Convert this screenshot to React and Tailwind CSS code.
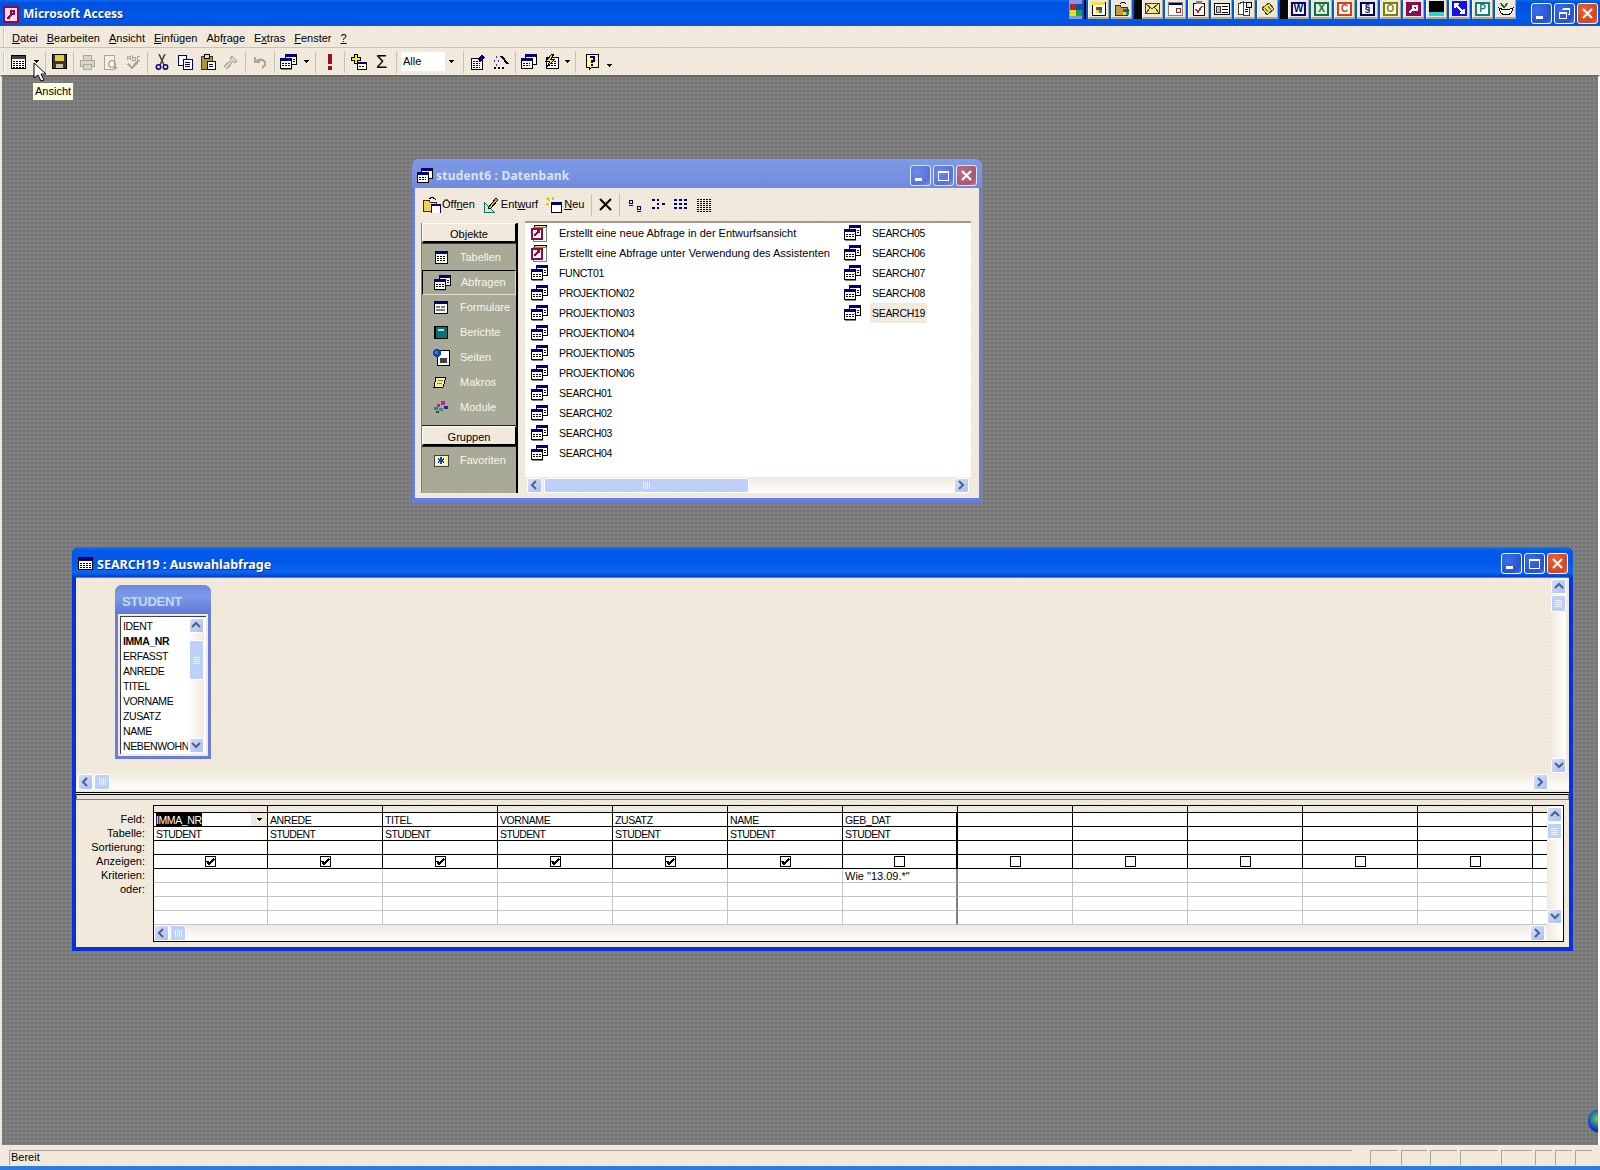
import React from 'react';

const beige = "bg-[#f1eadd] bg-[radial-gradient(#e8dfcf_0.6px,transparent_0.8px)] bg-[length:3px_3px]";
const desk = "bg-[#808080] bg-[radial-gradient(#6f6f6f_0.7px,transparent_0.9px)] bg-[length:4px_4px]";

const Ico = ({ w = 16, h = 16, children, className = '' }) => (
  <svg width={w} height={h} viewBox={`0 0 ${w} ${h}`} shapeRendering="crispEdges" className={`shrink-0 ${className}`}>{children}</svg>
);

const MiniTable = ({ x, y, w = 11, h = 10, head = '#000080' }) => (
  <g>
    <rect x={x} y={y} width={w} height={h} fill="#fff" stroke="#000" />
    <rect x={x} y={y} width={w} height="3" fill={head} />
    <path d={`M${x + 2} ${y + 5}h${w - 3}M${x + 2} ${y + 7}h${w - 3}`} stroke="#000" strokeDasharray="2 1" />
  </g>
);

const QueryIcon = () => (
  <Ico w={17} h={16}>
    <rect x="7" y="2" width="10" height="9" fill="#808080" />
    <MiniTable x={5} y={0} />
    <rect x="1" y="6" width="11" height="10" fill="#808080" />
    <MiniTable x={0} y={4} />
  </Ico>
);

const WizardIcon = () => (
  <Ico w={17} h={17}>
    <rect x="3" y="0" width="12" height="3" fill="#f5e050" stroke="#000" />
    <rect x="2" y="2" width="13" height="14" fill="#fff" stroke="#808080" />
    <rect x="1" y="4" width="10" height="10" fill="#fff" stroke="#8b0a50" strokeWidth="1.5" />
    <path d="M3 11l4-4M6 6h2v2" stroke="#8b0a50" fill="none" strokeWidth="1.5" />
  </Ico>
);

const KeyIcon = () => (
  <Ico w={16} h={17}>
    <rect x="0" y="0" width="16" height="17" fill="#8b0a50" />
    <rect x="2" y="2" width="12" height="13" fill="#f4dce8" />
    <path d="M4 13l5-5M8 5h3v3h-3zM5 11l1 2" stroke="#8b0a50" fill="none" strokeWidth="1.6" />
  </Ico>
);

const Sheet = () => (
  <Ico w={15} h={14}>
    <rect x="0.5" y="0.5" width="14" height="13" fill="#fff" stroke="#000" />
    <rect x="1" y="1" width="13" height="3" fill="#404050" />
    <path d="M2 6h11M2 8h11M2 10h11M2 12h11" stroke="#000" strokeDasharray="2 1" />
  </Ico>
);

const Disk = () => (
  <Ico w={15} h={15}>
    <rect x="0.5" y="0.5" width="14" height="14" fill="#3a3a20" stroke="#000" />
    <rect x="3" y="1" width="9" height="6" fill="#e8c83c" />
    <rect x="4" y="10" width="7" height="4" fill="#c8c8a0" />
  </Ico>
);

const GrayDoc = ({ kind }) => (
  <Ico w={16} h={16}>
    {kind === 'print' && <g fill="#d8d4c8" stroke="#aca899"><rect x="4" y="1" width="8" height="5" /><rect x="1" y="6" width="14" height="6" /><rect x="4" y="10" width="8" height="5" /></g>}
    {kind === 'preview' && <g fill="none" stroke="#aca899"><rect x="2" y="1" width="10" height="14" fill="#f4f1e8" /><circle cx="10" cy="10" r="3.5" strokeWidth="1.5" /><path d="M13 13l2 2" strokeWidth="2" /></g>}
    {kind === 'spell' && <g fill="none" stroke="#aca899"><path d="M2 6V2h3v4M2 4h3M7 1v5h3V3.500H7M15 2h-3v4h3" /><path d="M3 10l4 4 7-8" strokeWidth="2.500" /></g>}
    {kind === 'brush' && <g fill="#d8d4c8" stroke="#aca899"><path d="M9 2l5 5-3 2-4-4zM7 7l2 2-5 6-3-3z" /></g>}
    {kind === 'undo' && <g fill="none" stroke="#aca899" strokeWidth="2"><path d="M3 3v5h5M4 8c3-4 9-3 9 2 0 2-1 3-3 4" /></g>}
  </Ico>
);

const Scissors = () => (
  <Ico w={14} h={16}>
    <g fill="none" stroke="#000080" strokeWidth="1.500" shapeRendering="auto">
      <path d="M4 0l5 11M10 0L5 11" stroke="#404040" />
      <circle cx="3.500" cy="13" r="2.200" />
      <circle cx="10.500" cy="13" r="2.200" />
    </g>
  </Ico>
);

const Copy = () => (
  <Ico w={16} h={16}>
    <rect x="1" y="1" width="8" height="10" fill="#fff" stroke="#000080" />
    <rect x="6" y="5" width="9" height="10" fill="#fff" stroke="#000080" />
    <path d="M8 8h5M8 10h5M8 12h5" stroke="#000080" />
  </Ico>
);

const Paste = () => (
  <Ico w={16} h={16}>
    <rect x="1" y="2" width="11" height="13" fill="#a89838" stroke="#403818" />
    <rect x="4" y="0" width="5" height="4" fill="#e8e0a0" stroke="#000" />
    <rect x="7" y="7" width="8" height="8" fill="#fff" stroke="#000080" />
    <path d="M9 10h4M9 12h4" stroke="#000080" />
  </Ico>
);

const Bang = () => (
  <Ico w={6} h={16}>
    <rect x="1" y="0" width="4" height="10" fill="#a01010" />
    <rect x="1" y="12" width="4" height="4" fill="#a01010" />
  </Ico>
);

const ShowTable = () => (
  <Ico w={17} h={16}>
    <path d="M4 0h3v3h3v3H7v3H4V6H1V3h3z" fill="#f8e830" stroke="#000" />
    <rect x="7" y="8" width="9" height="7" fill="#fff" stroke="#000" />
    <rect x="7" y="8" width="9" height="2" fill="#000080" />
    <path d="M9 12h5" stroke="#000" strokeDasharray="2 1" />
  </Ico>
);

const Props = () => (
  <Ico w={16} h={16}>
    <rect x="1" y="4" width="11" height="11" fill="#fff" stroke="#000" />
    <path d="M3 7h7M3 9h7M3 11h7M3 13h7" stroke="#000" strokeDasharray="2 1" />
    <path d="M7 5l5-4 3 3-5 4z" fill="#000080" />
  </Ico>
);

const Wand = () => (
  <Ico w={16} h={16}>
    <path d="M8 2l7 8" stroke="#000" strokeWidth="2" />
    <path d="M3 3h1M1 7h1M5 7h1M3 11h1" stroke="#2040c0" strokeWidth="2" />
    <path d="M1 14h2M5 14h2M9 14h2" stroke="#000" strokeWidth="2" />
  </Ico>
);

const DbWin = () => (
  <Ico w={16} h={15}>
    <rect x="4" y="0" width="11" height="10" fill="#fff" stroke="#000" />
    <rect x="4" y="0" width="11" height="3" fill="#000080" />
    <rect x="0" y="4" width="11" height="10" fill="#fff" stroke="#000" />
    <rect x="0" y="4" width="11" height="3" fill="#000080" />
    <path d="M2 9h7M2 11h7" stroke="#000" strokeDasharray="2 1" />
  </Ico>
);

const NewObj = () => (
  <Ico w={16} h={15}>
    <rect x="3" y="3" width="12" height="11" fill="#fff" stroke="#000" />
    <path d="M5 7h8M5 9h8M5 11h8" stroke="#000" strokeDasharray="2 1" />
    <path d="M9 0L3 7h4l-3 6 8-8H8l3-5z" fill="#f8e030" stroke="#000" />
  </Ico>
);

const Help = () => (
  <Ico w={15} h={18}>
    <path d="M1 1h12v13H7l-3 3v-3H1z" fill="#fff8a0" stroke="#000" />
    <path d="M5 4h4v4H7v2M7 11v2" stroke="#000080" strokeWidth="2" fill="none" />
  </Ico>
);

const Caret = ({ className = '' }) => (
  <Ico w={5} h={3} className={className}><path d="M0 0h5v1H0zM1 1h3v1H1zM2 2h1v1H2z" fill="#000" /></Ico>
);

const TbCell = ({ children, w = 'w-[23px]' }) => (
  <div className={`${w} h-full shrink-0 flex items-center justify-center`}>{children}</div>
);

const TbSep = ({ w = 'w-[6px]' }) => (
  <div className={`${w} h-[22px] shrink-0 flex justify-center`}><div className="w-px h-full bg-[#c5c2b8]" /></div>
);

const Grip = () => (
  <div className="w-[2px] h-[20px] bg-[#c5c2b8] border-r border-white shrink-0" />
);

const menus = [
  ['D', 'atei'], ['B', 'earbeiten'], ['A', 'nsicht'], ['E', 'infügen'],
  ['Ab', 'frage', 'f'], ['E', 'xtras', 'x'], ['F', 'enster'], ['?', ''],
];

const MenuBar = () => (
  <div className={`h-[22px] flex items-center pl-[3px] border-b border-[#c5c2b8] ${beige}`}>
    <Grip />
    <div className="flex gap-[9px] ml-[7px] pt-[3px]">
      {menus.map(([a, b], i) => (
        <span key={i} className="text-[11px] leading-none text-black">
          {i === 4 ? <>Abf<u>r</u>age</> : i === 5 ? <>E<u>x</u>tras</> : <><u>{a}</u>{b}</>}
        </span>
      ))}
    </div>
  </div>
);

const Toolbar = () => (
  <div className={`h-[27px] flex items-center pl-[3px] ${beige}`}>
    <Grip />
    <div className="flex items-center h-full ml-[2px]">
      <TbCell><Sheet /></TbCell>
      <TbCell w="w-[12px]"><Caret /></TbCell>
      <TbSep />
      <TbCell><Disk /></TbCell>
      <TbSep w="w-[4px]" />
      <TbCell><GrayDoc kind="print" /></TbCell>
      <TbCell><GrayDoc kind="preview" /></TbCell>
      <TbCell><GrayDoc kind="spell" /></TbCell>
      <TbSep />
      <TbCell><Scissors /></TbCell>
      <TbCell><Copy /></TbCell>
      <TbCell><Paste /></TbCell>
      <TbCell><GrayDoc kind="brush" /></TbCell>
      <TbSep />
      <TbCell><GrayDoc kind="undo" /></TbCell>
      <TbSep />
      <TbCell><QueryIcon /></TbCell>
      <TbCell w="w-[12px]"><Caret /></TbCell>
      <TbSep />
      <TbCell><Bang /></TbCell>
      <TbSep />
      <TbCell><ShowTable /></TbCell>
      <TbCell><span className="text-[18px] leading-none text-black">Σ</span></TbCell>
      <TbSep />
      <div className="w-[56px] h-[19px] ml-[2px] mr-[3px] bg-white flex items-center justify-between pl-[2px]">
        <span className="text-[11px] leading-none">Alle</span>
        <div className={`w-[12px] h-full flex items-center justify-center ${beige}`}><Caret /></div>
      </div>
      <TbSep />
      <TbCell><Props /></TbCell>
      <TbCell><Wand /></TbCell>
      <TbSep />
      <TbCell w="w-[22px]"><DbWin /></TbCell>
      <TbCell w="w-[22px]"><NewObj /></TbCell>
      <TbCell w="w-[10px]"><Caret /></TbCell>
      <TbSep />
      <div className="w-[3px]" />
      <TbCell><Help /></TbCell>
      <TbCell w="w-[10px]"><Caret className="mt-[8px]" /></TbCell>
    </div>
  </div>
);

const LaunchBtn = ({ children }) => (
  <div className="w-[21px] h-[19px] mr-[2px] shrink-0 bg-[#ece9d8] border-b-2 border-r border-[#aca899] border-l border-l-white flex items-center justify-center overflow-hidden">
    {children}
  </div>
);

const LetterIcon = ({ color, bg = 'bg-white', children }) => (
  <div className={`w-[15px] h-[14px] border-2 flex items-center justify-center text-[10px] font-bold leading-none ${bg}`} style={{ borderColor: color, color }}>{children}</div>
);

const QuickLaunch = () => (
  <div className="flex items-start h-full ml-[1069px]">
    <div className="w-[13px] h-[19px] bg-[#7f9adf] flex items-center justify-center">
      <Ico w={12} h={12}>
        <rect x="0" y="0" width="6" height="6" fill="#c02020" /><rect x="6" y="0" width="6" height="6" fill="#2040c0" />
        <rect x="0" y="6" width="6" height="6" fill="#e8e020" /><rect x="6" y="6" width="6" height="6" fill="#20a040" />
      </Ico>
    </div>
    <div className="w-[2px] h-[19px] bg-[#0a0a0a] mx-[2px]" />
    <LaunchBtn>
      <Ico w={15} h={15}>
        <rect x="1" y="1" width="13" height="13" fill="#fff" stroke="#000" />
        <rect x="1" y="1" width="13" height="3" fill="#f0e040" />
        <rect x="5" y="6" width="3" height="3" fill="#d02020" /><rect x="8" y="6" width="3" height="3" fill="#2040d0" />
        <rect x="5" y="9" width="3" height="3" fill="#e8e020" /><rect x="8" y="9" width="3" height="3" fill="#20a040" />
      </Ico>
    </LaunchBtn>
    <LaunchBtn>
      <Ico w={16} h={15}>
        <path d="M1 4h5l1 2h6v8H1z" fill="#b8a040" stroke="#403010" />
        <path d="M6 3c2-3 5-2 6 0" fill="none" stroke="#000" />
        <rect x="9" y="8" width="3" height="3" fill="#d02020" /><rect x="12" y="8" width="3" height="3" fill="#2040d0" />
        <rect x="9" y="11" width="3" height="3" fill="#e8e020" /><rect x="12" y="11" width="3" height="3" fill="#20a040" />
      </Ico>
    </LaunchBtn>
    <div className="w-[8px] h-[19px] bg-[#0a0a0a] shrink-0" />
    <LaunchBtn>
      <Ico w={15} h={11}><rect x="0.500" y="0.500" width="14" height="10" fill="#f8e890" stroke="#404020" /><path d="M1 1l6 5 6-5M1 10l4-5M14 10l-4-5" fill="none" stroke="#404020" /></Ico>
    </LaunchBtn>
    <LaunchBtn>
      <Ico w={15} h={14}><rect x="0.500" y="0.500" width="14" height="13" fill="#fff" stroke="#808080" /><rect x="1" y="1" width="13" height="2" fill="#000080" /><rect x="8" y="6" width="4" height="4" fill="none" stroke="#a02020" /></Ico>
    </LaunchBtn>
    <LaunchBtn>
      <Ico w={12} h={15}><rect x="0.500" y="2.500" width="11" height="12" fill="#fff" stroke="#000" /><rect x="3" y="0" width="6" height="3" fill="#808080" /><path d="M3 8l2 3 4-6" fill="none" stroke="#c02020" strokeWidth="1.500" /></Ico>
    </LaunchBtn>
    <LaunchBtn>
      <Ico w={16} h={12}><rect x="0.500" y="0.500" width="15" height="11" fill="#fff" stroke="#000" /><rect x="2" y="3" width="4" height="6" fill="#c0c0c0" stroke="#404040" /><path d="M8 3h6M8 6h6M8 9h6" stroke="#000" /></Ico>
    </LaunchBtn>
    <LaunchBtn>
      <Ico w={16} h={15}><path d="M1 3l5-2v12l-5 1zM6 1h6v13H6z" fill="#fff" stroke="#404040" /><circle cx="12" cy="4" r="3" fill="#e8e8e8" stroke="#000" /><path d="M8 8h3M8 10h3" stroke="#000" /></Ico>
    </LaunchBtn>
    <LaunchBtn>
      <Ico w={14} h={14}><path d="M1 6l7-5 5 6-7 6z" fill="#f0e060" stroke="#404020" /><path d="M4 6l3 4M7 4l3 4" stroke="#808040" /></Ico>
    </LaunchBtn>
    <div className="w-[8px] h-[19px] bg-[#0a0a0a] shrink-0" />
    <LaunchBtn><LetterIcon color="#000080">W</LetterIcon></LaunchBtn>
    <LaunchBtn><LetterIcon color="#107040" bg="bg-[#e0f0e0]">X</LetterIcon></LaunchBtn>
    <LaunchBtn><LetterIcon color="#d04010">C</LetterIcon></LaunchBtn>
    <LaunchBtn><LetterIcon color="#000060">§</LetterIcon></LaunchBtn>
    <LaunchBtn><LetterIcon color="#808000">O</LetterIcon></LaunchBtn>
    <LaunchBtn>
      <div className="w-[15px] h-[14px] bg-[#8b0a50] flex items-center justify-center">
        <Ico w={11} h={10}><path d="M1 9l5-5M5 2h4v4H5z" stroke="#fff" fill="none" strokeWidth="1.500" /></Ico>
      </div>
    </LaunchBtn>
    <LaunchBtn>
      <div className="w-[15px] h-[15px] bg-black flex flex-col justify-end"><div className="h-[4px] bg-[#30d0d0]" /></div>
    </LaunchBtn>
    <LaunchBtn>
      <div className="w-[15px] h-[15px] bg-[#1010f0] flex items-center justify-center">
        <Ico w={11} h={11}><path d="M1 5V1h4M1 1l9 9M10 6v4H6" stroke="#fff" fill="none" strokeWidth="1.500" /></Ico>
      </div>
    </LaunchBtn>
    <LaunchBtn><LetterIcon color="#108080">P</LetterIcon></LaunchBtn>
    <LaunchBtn>
      <Ico w={16} h={14}><path d="M1 6c3 2 11 2 14 0-1 6-4 7-7 7s-6-1-7-7z" fill="#fff" stroke="#000" /><path d="M3 1l3 5M9 1L7 5" stroke="#107030" strokeWidth="2" /></Ico>
    </LaunchBtn>
  </div>
);

const winTones = {
  active: {
    base: 'bg-[radial-gradient(circle_at_30%_30%,#3a6ee8,#2a50d0_70%,#4a78f0)]',
    close: 'bg-[radial-gradient(circle_at_30%_30%,#e8603c,#d04820_70%,#e86c40)]',
    edge: 'border-white',
  },
  inactive: {
    base: 'bg-[radial-gradient(circle_at_30%_30%,#6a8ae8,#5872d8_70%,#7b96ea)]',
    close: 'bg-[radial-gradient(circle_at_30%_30%,#b87088,#a85870_70%,#c07c90)]',
    edge: 'border-[#dfe6fa]',
  },
};

const WinBtn = ({ type, tone }) => {
  const t = winTones[tone];
  return (
    <div className={`w-[21px] h-[21px] rounded-[3px] border flex items-center justify-center ${t.edge} ${type === 'close' ? t.close : t.base}`}>
      <Ico w={13} h={13}>
        {type === 'min' && <rect x="1" y="9" width="7" height="3" fill="#fff" />}
        {type === 'max' && <path d="M1.500 2.500h10v9h-10zM1 3.500h11" fill="none" stroke="#fff" strokeWidth="1.500" />}
        {type === 'restore' && <path d="M4.500 1.500h7v6h-2M1.500 5.500h7v6h-7zM1 6.500h8M4 2.500h8" fill="none" stroke="#fff" />}
        {type === 'close' && <path d="M2 2l9 9M11 2l-9 9" stroke="#fff" strokeWidth="2.200" shapeRendering="auto" />}
      </Ico>
    </div>
  );
};

const Chevron = ({ dir }) => {
  const d = { up: 'M1 6l4-4 4 4', down: 'M1 2l4 4 4-4', left: 'M6 1L2 5l4 4', right: 'M2 1l4 4-4 4' }[dir];
  return <svg width="10" height="10" viewBox="0 0 10 10"><path d={d} fill="none" stroke="#4d6185" strokeWidth="2" /></svg>;
};

const ScrollBtn = ({ dir, className = 'w-[15px] h-[15px]' }) => (
  <div className={`shrink-0 rounded-[2px] border border-white bg-[linear-gradient(135deg,#d4e0fd,#a8c0f4)] flex items-center justify-center ${className}`}>
    <Chevron dir={dir} />
  </div>
);

const ThumbLines = ({ vertical }) => (
  <div className={`flex ${vertical ? 'flex-col gap-px' : 'gap-px'}`}>
    {[0, 1, 2, 3].map(i => <div key={i} className={`${vertical ? 'w-[7px] h-px' : 'w-px h-[7px]'} bg-[#eef2fd]`} />)}
  </div>
);

const Thumb = ({ vertical, className }) => (
  <div className={`shrink-0 rounded-[2px] border border-white bg-[#bcd0fa] flex items-center justify-center ${className}`}>
    <ThumbLines vertical={vertical} />
  </div>
);

const queries = ['FUNCT01', 'PROJEKTION02', 'PROJEKTION03', 'PROJEKTION04', 'PROJEKTION05', 'PROJEKTION06', 'SEARCH01', 'SEARCH02', 'SEARCH03', 'SEARCH04'];
const queries2 = ['SEARCH05', 'SEARCH06', 'SEARCH07', 'SEARCH08', 'SEARCH19'];

const ListRow = ({ icon, label, selected, upper }) => (
  <div className="h-[20px] flex items-center">
    <div className="w-[27px] flex shrink-0 -ml-px mr-px">{icon}</div>
    <span className={`leading-[20px] h-[20px] px-[2px] -ml-[2px] whitespace-nowrap ${upper ? 'text-[10.500px] tracking-[-0.3px]' : 'text-[11px]'} ${selected ? 'bg-[#f1eadd]' : ''}`}>{label}</span>
  </div>
);

const SideIcon = ({ type }) => (
  <Ico w={17} h={17}>
    {type === 'table' && <g><rect x="2" y="2" width="12" height="12" fill="#fff" stroke="#000" /><rect x="2" y="2" width="12" height="3" fill="#000080" /><path d="M4 7h9M4 9h9M4 11h9" stroke="#000" strokeDasharray="2 1" /></g>}
    {type === 'form' && <g><rect x="1" y="2" width="13" height="12" fill="#fff" stroke="#000" /><rect x="1" y="2" width="13" height="3" fill="#000080" /><rect x="3" y="7" width="4" height="2" fill="#808080" /><rect x="8" y="7" width="4" height="2" fill="#808080" /><rect x="3" y="10" width="9" height="2" fill="#808080" /></g>}
    {type === 'report' && <g><rect x="1" y="2" width="13" height="12" fill="#107070" stroke="#000" /><path d="M2 2v12" stroke="#000" strokeWidth="2" /><rect x="5" y="5" width="6" height="2" fill="#a0e0e0" /></g>}
    {type === 'page' && <g><rect x="4" y="1" width="12" height="15" fill="#fff" stroke="#000" /><circle cx="4" cy="4" r="4" fill="#1040c0" /><path d="M2 2h3v3H2z" fill="#20a040" /><rect x="7" y="9" width="7" height="5" fill="#404040" /></g>}
    {type === 'macro' && <g><path d="M3 3h10l-3 10H1z" fill="#f8f090" stroke="#000" /><path d="M5 6h5M4 9h5" stroke="#808040" /></g>}
    {type === 'module' && <g><rect x="1" y="8" width="4" height="3" fill="#2080a0" /><rect x="4" y="5" width="3" height="3" fill="#c020a0" /><rect x="8" y="2" width="4" height="4" fill="#c020a0" /><rect x="6" y="9" width="4" height="3" fill="#20a080" /><rect x="11" y="7" width="4" height="3" fill="#203080" /><rect x="3" y="12" width="3" height="2" fill="#404040" /></g>}
    {type === 'fav' && <g><rect x="1" y="3" width="14" height="11" fill="#f8f0a0" stroke="#404040" /><rect x="3" y="5" width="10" height="8" fill="#f8f8c0" /><path d="M8 5v7M5 7l6 3M11 7l-6 3" stroke="#1040c0" strokeWidth="1.500" /></g>}
  </Ico>
);

const sideA = [
  ['table', 'Tabellen'],
  ['query', 'Abfragen'],
  ['form', 'Formulare'],
  ['report', 'Berichte'],
  ['page', 'Seiten'],
  ['macro', 'Makros'],
  ['module', 'Module'],
];

const SideBtn = ({ label }) => (
  <div className={`h-[20px] w-[95px] pt-[3px] border-r-2 border-b-2 border-black border-l border-t border-l-white border-t-white flex items-center justify-center text-[11px] text-black ${beige}`}>
    {label}
  </div>
);

const SideItem = ({ type, label, selected }) => (
  <div className={`h-[25px] w-[94px] flex items-center pl-[11px] ${selected ? 'border border-t-black border-l-black border-r-[#e4dccc] border-b-[#e4dccc]' : ''}`}>
    <div className="w-[27px] shrink-0 flex">{type === 'query' ? <QueryIcon /> : <SideIcon type={type} />}</div>
    <span className="text-[11px] leading-none text-[#f8f6ea]">{label}</span>
  </div>
);

const DbWindow = () => (
  <div className="absolute left-[412px] top-[84px] w-[570px] h-[344px] rounded-t-[7px] bg-[#6a7ddc] px-[3px] pb-[5px] flex flex-col">
    <div className="h-[29px] -mx-[3px] rounded-t-[7px] flex items-center pt-[4px] pl-[5px] pr-[5px] gap-[3px] bg-[linear-gradient(#7c9cf0,#7b97e4_20%,#7490e0_75%,#6f8ae0)]">
      <DbWin />
      <span className="text-[12px] font-bold tracking-[0.2px] text-[#d8e4f8] font-['Noto_Sans',sans-serif]">student6 : Datenbank</span>
      <div className="ml-auto flex gap-[2px]">
        <WinBtn type="min" tone="inactive" />
        <WinBtn type="max" tone="inactive" />
        <WinBtn type="close" tone="inactive" />
      </div>
    </div>
    <div className={`flex-1 flex flex-col ${beige}`}>
      <div className="h-[33px] flex items-center pl-[8px]">
        <Ico w={18} h={16}><path d="M0 3h6l1 2h6v9H0z" fill="#f0d050" stroke="#403010" /><rect x="8" y="7" width="9" height="9" fill="#fff" stroke="#000080" /><rect x="8" y="7" width="9" height="2" fill="#000080" /><path d="M6 2c2-2 5-2 7 1" fill="none" stroke="#000" /></Ico>
        <span className="text-[11px] ml-px">Öff<u>n</u>en</span>
        <Ico w={16} h={16} className="ml-[8px]"><path d="M1 15V5l10 10z" fill="#e0e8c0" stroke="#107070" /><path d="M5 11l8-10 2 2-8 9z" fill="#e0c020" stroke="#000" /></Ico>
        <span className="text-[11px] ml-[2px]">Ent<u>w</u>urf</span>
        <Ico w={16} h={16} className="ml-[8px]"><path d="M1 1l3 3M7 0v3M0 7h3" stroke="#e0c020" strokeWidth="2" /><rect x="5" y="5" width="10" height="10" fill="#fff" stroke="#000" /><rect x="5" y="5" width="10" height="3" fill="#000080" /></Ico>
        <span className="text-[11px] ml-[2px]"><u>N</u>eu</span>
        <div className="w-px h-[22px] bg-[#c5c2b8] ml-[7px]" />
        <Ico w={13} h={13} className="ml-[7px]"><path d="M1 1l11 11M12 1L1 12" stroke="#000" strokeWidth="2" shapeRendering="auto" /></Ico>
        <div className="w-px h-[22px] bg-[#c5c2b8] ml-[7px]" />
        <Ico w={16} h={14} className="ml-[8px]"><path d="M1 2h3v3H1zM9 8h3v3H9z" fill="none" stroke="#000080" /><path d="M1 7h4M9 13h4" stroke="#000080" /></Ico>
        <Ico w={16} h={14} className="ml-[7px]"><path d="M1 2h3M6 2h2M6 6h2M11 6h3M1 10h3M6 10h2" stroke="#000080" strokeWidth="2" /></Ico>
        <Ico w={16} h={14} className="ml-[7px]"><path d="M0 2h3M5 2h3M10 2h3M0 6h3M5 6h3M10 6h3M0 10h3M5 10h3M10 10h3" stroke="#000080" strokeWidth="2" /></Ico>
        <Ico w={16} h={14} className="ml-[6px]"><path d="M1 1h14M1 3h14M1 5h14M1 7h14M1 9h14M1 11h14M1 13h14" stroke="#000" strokeDasharray="2 1" /></Ico>
      </div>
      <div className="flex-1 flex pl-[6px] pr-[8px] pb-[5px]">
        <div className="w-[97px] shrink-0 bg-[#a9a997] border-r-2 border-black border-l border-l-[#808070] flex flex-col mt-[2px]">
          <SideBtn label="Objekte" />
          <div className="flex flex-col pt-px border-t border-[#404040]">
            {sideA.map(([t, l]) => <SideItem key={t} type={t} label={l} selected={t === 'query'} />)}
          </div>
          <div className="border-t border-[#202020] mt-[5px]"><SideBtn label="Gruppen" /></div>
          <div className="border-t border-[#202020] pt-px"><SideItem type="fav" label="Favoriten" /></div>
        </div>
        <div className="w-[7px] shrink-0" />
        <div className="flex-1 bg-white border-t-2 border-[#a09c8c] flex flex-col min-w-0">
          <div className="flex-1 flex pl-[7px]">
            <div className="w-[313px] shrink-0">
              <ListRow icon={<WizardIcon />} label="Erstellt eine neue Abfrage in der Entwurfsansicht" />
              <ListRow icon={<WizardIcon />} label="Erstellt eine Abfrage unter Verwendung des Assistenten" />
              {queries.map(q => <ListRow key={q} upper icon={<QueryIcon />} label={q} />)}
            </div>
            <div>
              {queries2.map(q => <ListRow key={q} upper icon={<QueryIcon />} label={q} selected={q === 'SEARCH19'} />)}
            </div>
          </div>
          <div className={`h-[16px] flex items-center px-[2px] ${beige}`}>
            <ScrollBtn dir="left" />
            <Thumb className="w-[205px] h-[15px] ml-[2px]" />
            <div className="flex-1 h-full bg-[linear-gradient(#f1eadd,#ffffff)]" />
            <ScrollBtn dir="right" />
          </div>
        </div>
      </div>
    </div>
  </div>
);

const tableFields = ['IDENT', 'IMMA_NR', 'ERFASST', 'ANREDE', 'TITEL', 'VORNAME', 'ZUSATZ', 'NAME', 'NEBENWOHN'];

const TableBox = () => (
  <div className="w-[96px] h-[174px] ml-[39px] mt-[7px] rounded-t-[7px] bg-[#6a7ddc] px-[3px] pb-[3px] flex flex-col">
    <div className="h-[29px] -mx-[3px] rounded-t-[7px] flex items-center pt-[4px] pl-[7px] bg-[linear-gradient(#6f8ae0,#7b9ae8_40%,#5f78d8)]">
      <span className="text-[13px] font-bold tracking-[-0.2px] text-[#c8d8f0]">STUDENT</span>
    </div>
    <div className={`flex-1 p-[2px] ${beige}`}>
      <div className="h-full bg-white border-t border-l border-[#404040] flex">
        <div className="flex-1 min-w-0 pl-[2px] pt-[2px] overflow-hidden">
          {tableFields.map(f => (
            <div key={f} className={`h-[15px] text-[10.500px] tracking-[-0.4px] leading-[15px] text-black whitespace-nowrap ${f === 'IMMA_NR' ? 'font-bold' : ''}`}>{f}</div>
          ))}
        </div>
        <div className="w-[16px] mr-[2px] shrink-0 flex flex-col items-center bg-[linear-gradient(90deg,#ffffff,#f1eadd)]">
          <ScrollBtn dir="up" className="w-[15px] h-[15px] mt-px" />
          <Thumb vertical className="w-[15px] h-[40px] mt-[7px]" />
          <ScrollBtn dir="down" className="w-[15px] h-[15px] mt-auto mb-px" />
        </div>
      </div>
    </div>
  </div>
);

const rowLabels = ['Feld:', 'Tabelle:', 'Sortierung:', 'Anzeigen:', 'Kriterien:', 'oder:'];
const cols = [
  ['IMMA_NR', 'STUDENT', true], ['ANREDE', 'STUDENT', true], ['TITEL', 'STUDENT', true],
  ['VORNAME', 'STUDENT', true], ['ZUSATZ', 'STUDENT', true], ['NAME', 'STUDENT', true],
  ['GEB_DAT', 'STUDENT', false], ['', '', false], ['', '', false], ['', '', false], ['', '', false], ['', '', false],
];

const Check = ({ on }) => (
  <div className="w-[11px] h-[11px] border border-black flex items-center justify-center bg-white">
    {on && <Ico w={9} h={9}><path d="M1 4l2 3 5-5" fill="none" stroke="#000" strokeWidth="2" /></Ico>}
  </div>
);

const Cell = ({ dark, thick, last, children, className = '' }) => (
  <div className={`h-[14px] flex items-center overflow-hidden text-[10.500px] tracking-[-0.4px] leading-none text-black ${dark ? 'border-b border-black' : 'border-b border-[#c4c4c4]'} ${last ? '' : thick ? `border-r-2 ${dark ? 'border-r-black' : 'border-r-[#808080]'}` : dark ? 'border-r border-r-black' : 'border-r border-r-[#c4c4c4]'} ${className}`}>
    {children}
  </div>
);

const QueryGrid = () => (
  <div className="w-[1394px] grid grid-cols-[114px_repeat(10,115px)_115px_14px]">
    {cols.map((c, i) => <div key={i} className={`h-[7px] border-b border-r border-black ${beige}`} />)}
    <div className={`h-[7px] border-b border-black ${beige}`} />

    {cols.map((c, i) => (
      <Cell key={i} dark thick={i === 6} className="bg-white pl-[2px] justify-between">
        {i === 0 ? <span className="bg-black text-white pt-[2px]">{c[0]}</span> : <span className="pt-[2px]">{c[0]}</span>}
        {i === 0 && (
          <div className={`w-[16px] h-full flex items-center justify-center ${beige}`}><Caret /></div>
        )}
      </Cell>
    ))}
    <Cell dark last className="bg-white" />

    {cols.map((c, i) => <Cell key={i} dark thick={i === 6} className="bg-white pl-[2px] pt-[2px] tracking-[-0.6px]">{c[1]}</Cell>)}
    <Cell dark last className="bg-white" />

    {cols.map((c, i) => <Cell key={i} dark thick={i === 6} className="bg-white" />)}
    <Cell dark last className="bg-white" />

    {cols.map((c, i) => <Cell key={i} dark thick={i === 6} className="bg-white justify-center"><Check on={c[2]} /></Cell>)}
    <Cell dark last className="bg-white" />

    {[0, 1, 2, 3].map(r => (
      <React.Fragment key={r}>
        {cols.map((c, i) => (
          <Cell key={i} thick={i === 6} className="bg-white pl-[2px] pt-px tracking-normal text-[11px]">{r === 0 && i === 6 ? 'Wie "13.09.*"' : ''}</Cell>
        ))}
        <Cell last className="bg-white" />
      </React.Fragment>
    ))}
  </div>
);

const QueryWindow = () => (
  <div className="absolute left-[72px] top-[472px] w-[1501px] h-[404px] rounded-t-[7px] bg-[#0831d9] px-[4px] pb-[4px] flex flex-col">
    <div className="h-[30px] -mx-[4px] rounded-t-[7px] flex items-center pt-[2px] pl-[6px] pr-[5px] gap-[4px] bg-[linear-gradient(#0a7cf8,#0058ee_12%,#0058e8_50%,#0a64f4_85%,#0040c8)]">
      <Ico w={15} h={13}><rect x="0.500" y="0.500" width="14" height="12" fill="#fff" stroke="#000" /><rect x="1" y="1" width="13" height="3" fill="#000080" /><path d="M2 6h11M2 8h11M2 10h11" stroke="#000" strokeDasharray="2 1" /></Ico>
      <span className="text-[12.500px] font-bold pt-[5px] text-white [text-shadow:1px_1px_#0a2a8a] font-['Noto_Sans',sans-serif]">SEARCH19 : Auswahlabfrage</span>
      <div className="ml-auto flex gap-[2px]">
        <WinBtn type="min" tone="active" />
        <WinBtn type="max" tone="active" />
        <WinBtn type="close" tone="active" />
      </div>
    </div>
    <div className={`h-[215px] shrink-0 border-t border-[#807c70] flex flex-col ${beige}`}>
      <div className="flex-1 flex min-h-0">
        <div className="flex-1 min-w-0"><TableBox /></div>
        <div className="w-[15px] mr-[3px] mt-px flex flex-col bg-[linear-gradient(90deg,#f1eadd,#ffffff)]">
          <ScrollBtn dir="up" className="w-[15px] h-[15px]" />
          <Thumb vertical className="w-[15px] h-[17px] mt-px" />
          <ScrollBtn dir="down" className="w-[15px] h-[15px] mt-auto" />
        </div>
      </div>
      <div className="h-[17px] mb-[2px] shrink-0 flex items-center pl-[2px] pr-[21px] bg-[linear-gradient(#f1eadd,#ffffff)]">
        <ScrollBtn dir="left" className="w-[15px] h-[16px]" />
        <Thumb className="w-[16px] h-[16px] ml-px" />
        <div className="flex-1" />
        <ScrollBtn dir="right" className="w-[15px] h-[16px]" />
      </div>
    </div>
    <div className={`h-[8px] shrink-0 border-t border-black flex flex-col justify-center ${beige}`}>
      <div className="h-[6px] border border-[#807c70] bg-[#e8e4d8] border-t-black" />
    </div>
    <div className={`flex-1 min-h-0 flex ${beige}`}>
      <div className="w-[77px] shrink-0 pt-[12px] pr-[8px]">
        {rowLabels.map(l => <div key={l} className="h-[14px] text-[11px] leading-[14px] text-right text-black">{l}</div>)}
      </div>
      <div className="w-[1411px] h-[137px] mt-[5px] border border-black flex">
        <div className="w-[1393px] flex flex-col min-w-0 overflow-hidden">
          <QueryGrid />
          <div className="h-[17px] flex items-center bg-[linear-gradient(#f1eadd,#ffffff)]">
            <ScrollBtn dir="left" className="w-[15px] h-[16px]" />
            <Thumb className="w-[16px] h-[16px] ml-px" />
            <div className="flex-1" />
            <ScrollBtn dir="right" className="w-[15px] h-[16px] mr-[2px]" />
          </div>
        </div>
        <div className="flex-1 flex flex-col pt-px pb-[17px] bg-[linear-gradient(90deg,#f1eadd,#ffffff)]">
          <ScrollBtn dir="up" className="w-[15px] h-[15px]" />
          <Thumb vertical className="w-[15px] h-[16px] mt-px" />
          <ScrollBtn dir="down" className="w-[15px] h-[15px] mt-auto" />
        </div>
      </div>
    </div>
  </div>
);

const statusCells = ['w-[28px]', 'w-[26px]', 'w-[27px]', 'w-[38px]', 'w-[31px]', 'w-[17px]', 'w-[17px]', 'w-[17px]'];

const StatusBar = () => (
  <div className={`h-[21px] shrink-0 flex items-start pt-[5px] pl-[9px] ${beige}`}>
    <div className="w-[1343px] h-[15px] border-t border-l border-[#aca899] text-[11px] leading-[13px] pl-px text-black">Bereit</div>
    <div className="flex gap-[3px] ml-[18px]">
      {statusCells.map((w, i) => <div key={i} className={`${w} h-[15px] border-t border-l border-[#aca899]`} />)}
    </div>
  </div>
);

export default function App() {
  return (
    <div className="w-[1600px] h-[1170px] flex flex-col overflow-hidden font-['Liberation_Sans',sans-serif] select-none">
      <div className="h-[26px] shrink-0 relative flex items-center bg-[linear-gradient(#0a6cf0,#0050e0_10%,#0058ea_70%,#0a50d8)]">
        <div className="absolute left-[3px] top-[4px] flex items-center gap-[4px] h-[20px]">
          <KeyIcon />
          <span className="text-[12px] font-bold text-white [text-shadow:1px_1px_#0a2a8a] font-['Noto_Sans',sans-serif]">Microsoft Access</span>
        </div>
        <QuickLaunch />
        <div className="ml-auto flex gap-[2px] pr-[2px]">
          <WinBtn type="min" tone="active" />
          <WinBtn type="restore" tone="active" />
          <WinBtn type="close" tone="active" />
        </div>
      </div>
      <MenuBar />
      <Toolbar />
      <div className={`flex-1 relative overflow-hidden border-t-2 border-t-[#6a6a64] border-l-2 border-l-[#ece9d8] border-r-2 border-r-[#ffffff] ${desk}`}>
        <div className="absolute left-[1586px] top-[1032px] w-[24px] h-[24px] rounded-full bg-[radial-gradient(circle_at_40%_40%,#60e040,#1040d0_50%,#001060)]" />
      </div>
      <StatusBar />
      <div className="h-[4px] shrink-0 bg-[#2f7be0]" />
      <div className="absolute left-0 top-[75px] w-[1600px] h-[1070px] pointer-events-none">
        <DbWindow />
        <QueryWindow />
        <svg width="13" height="20" viewBox="0 0 13 20" className="absolute left-[33px] top-[-13px]">
          <path d="M1 1v15l4-3 3 6 3-1-3-6h5z" fill="#fff" stroke="#000" />
        </svg>
        <div className="absolute left-[33px] top-[8px] h-[18px] px-[2px] bg-[#ffffe1] border-r border-b border-[#808080] text-[11px] leading-[17px] text-black">Ansicht</div>
      </div>
    </div>
  );
}
